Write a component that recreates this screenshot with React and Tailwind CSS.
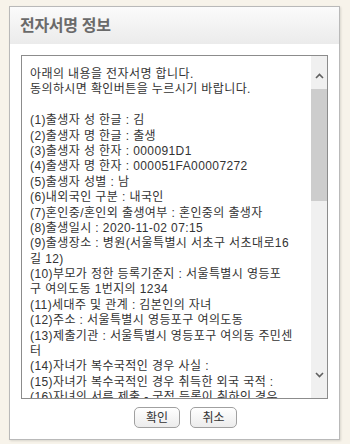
import React from "react";

const lines = [
  "아래의 내용을 전자서명 합니다.",
  "동의하시면 확인버튼을 누르시기 바랍니다.",
  "",
  "(1)출생자 성 한글 : 김",
  "(2)출생자 명 한글 : 출생",
  "(3)출생자 성 한자 : 000091D1",
  "(4)출생자 명 한자 : 000051FA00007272",
  "(5)출생자 성별 : 남",
  "(6)내외국인 구분 : 내국인",
  "(7)혼인중/혼인외 출생여부 : 혼인중의 출생자",
  "(8)출생일시 : 2020-11-02 07:15",
  "(9)출생장소 : 병원(서울특별시 서초구 서초대로16",
  "길 12)",
  "(10)부모가 정한 등록기준지 : 서울특별시 영등포",
  "구 여의도동 1번지의 1234",
  "(11)세대주 및 관계 : 김본인의 자녀",
  "(12)주소 : 서울특별시 영등포구 여의도동",
  "(13)제출기관 : 서울특별시 영등포구 여의동 주민센",
  "터",
  "(14)자녀가 복수국적인 경우 사실 :",
  "(15)자녀가 복수국적인 경우 취득한 외국 국적 :",
  "(16)자녀의 서류 제출 - 국적 등록이 취하인 경우",
];

function Chevron({ up }) {
  return (
    <svg width="9" height="6" viewBox="0 0 9 6" className="block">
      <path
        d={up ? "M1 5 L4.5 1.5 L8 5" : "M1 1 L4.5 4.5 L8 1"}
        fill="none"
        stroke="#606060"
        strokeWidth="1.6"
      />
    </svg>
  );
}

export default function App() {
  return (
    <div
      className="w-[350px] h-[444px] bg-[#f7f3ea] pt-[6px] pl-[9px]"
      style={{ fontFamily: '"Liberation Sans", "Noto Sans CJK KR", sans-serif' }}
    >
      <div className="w-[331px] h-[434px] bg-white border border-[#b9b9b9] shadow-[1px_1px_2px_rgba(0,0,0,0.12)] flex flex-col">
        <div className="h-[37px] bg-gradient-to-b from-[#fbfbfb] to-[#ebebeb] flex items-center pl-[10px]">
          <span className="text-[16px] font-bold text-[#6a6a6a] tracking-[-0.3px] leading-none">
            전자서명 정보
          </span>
        </div>
        <div className="px-[11px] pt-[11px] flex flex-col">
          <div className="h-[344px] border border-[#8c8c8c] flex overflow-hidden">
            <div className="flex-1 overflow-hidden pl-[8px] pt-[11px] text-[12px] leading-[15.4px] tracking-[0.4px] text-[#333]">
              {lines.map((l, i) => (
                <div key={i} className="whitespace-nowrap h-[15.4px]">
                  {l || "\u00a0"}
                </div>
              ))}
            </div>
            <div className="w-[16px] bg-[#f0f0f0] flex flex-col items-center">
              <div className="h-[33px] pt-[17px] flex justify-center">
                <Chevron up />
              </div>
              <div className="w-[16px] h-[112px] bg-[#cdcdcd]" />
              <div className="flex-1" />
              <div className="h-[26px] flex justify-center">
                <Chevron />
              </div>
            </div>
          </div>
          <div className="flex justify-center gap-[10px] mt-[8px] pl-[22px]">
            <button className="w-[46px] h-[21px] rounded-[5px] border border-[#a0a0a0] bg-gradient-to-b from-white to-[#ececec] text-[12px] text-[#333] leading-none">
              확인
            </button>
            <button className="w-[47px] h-[21px] rounded-[5px] border border-[#a0a0a0] bg-gradient-to-b from-white to-[#ececec] text-[12px] text-[#333] leading-none">
              취소
            </button>
          </div>
        </div>
      </div>
    </div>
  );
}
